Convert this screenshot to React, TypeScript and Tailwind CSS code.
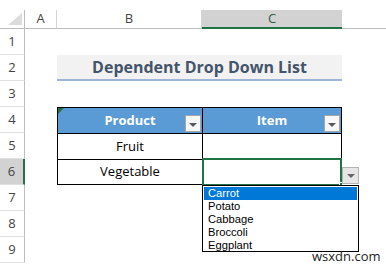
import React from 'react';

const items = ['Carrot', 'Potato', 'Cabbage', 'Broccoli', 'Eggplant'];

function cn(...c: (string | false | undefined)[]) {
  return c.filter(Boolean).join(' ');
}

function FilterButton({ className = '' }: { className?: string }) {
  return (
    <div
      className={`flex items-center justify-center w-[16px] h-[17px] border border-[#a6a6a6] bg-[#f7f7f7] ${className}`}
    >
      <div className="w-0 h-0 border-l-[4px] border-r-[4px] border-t-[4px] border-l-transparent border-r-transparent border-t-[#595959] mt-[2px]" />
    </div>
  );
}

function RowHead({ n, active }: { n: number; active?: boolean }) {
  return (
    <div
      className={cn(
        'w-[25px] shrink-0 flex items-center justify-center border-b border-[#e1e1e1] text-[13px] text-[#444]',
        active ? 'bg-[#d2d2d2] border-r-2 border-r-[#217346]' : 'bg-white border-r border-r-[#bdbdbd]'
      )}
    >
      {n}
    </div>
  );
}

export default function App() {
  return (
    <div
      className="w-[386px] h-[264px] bg-white overflow-hidden relative"
      style={{ fontFamily: '"Open Sans", "Liberation Sans", sans-serif' }}
    >
      <div className="h-[10px]" />

      {/* column headers */}
      <div className="flex h-[19px] text-[13px] text-[#444]">
        <div className="w-[25px] shrink-0 relative border-r border-b border-[#bdbdbd]">
          <svg className="absolute right-[2px] bottom-[3px]" width="14" height="12" viewBox="0 0 14 12">
            <polygon points="14,0 14,12 0,12" fill="#dcdcdc" />
          </svg>
        </div>
        <div className="w-[32px] shrink-0 flex items-center justify-center border-r border-b border-[#d4d4d4] border-b-[#bdbdbd]">A</div>
        <div className="w-[145px] shrink-0 flex items-center justify-center border-r border-b border-[#d4d4d4] border-b-[#bdbdbd]">B</div>
        <div className="w-[140px] shrink-0 flex items-center justify-center bg-[#d2d2d2] border-b-2 border-[#217346] text-[#2f5e45]">C</div>
        <div className="flex-1 border-b border-[#bdbdbd]" />
      </div>

      {/* row 1 */}
      <div className="flex h-[26px]">
        <RowHead n={1} />
      </div>

      {/* row 2 title */}
      <div className="flex h-[26px]">
        <RowHead n={2} />
        <div className="w-[32px] shrink-0" />
        <div className="w-[285px] shrink-0 bg-[#f2f2f2] border-b-2 border-[#9fb4d9] flex items-center justify-center text-[16px] font-bold text-[#44546a]">
          Dependent Drop Down List
        </div>
      </div>

      {/* row 3 */}
      <div className="flex h-[26px]">
        <RowHead n={3} />
      </div>

      {/* row 4 table header */}
      <div className="flex h-[26px]">
        <RowHead n={4} />
        <div className="w-[32px] shrink-0" />
        <div className="w-[145px] shrink-0 relative bg-[#5b9bd5] border-l border-t border-black flex items-center justify-center text-white font-bold text-[13px]">
          <svg className="absolute left-0 top-0" width="6" height="6" viewBox="0 0 6 6">
            <polygon points="0,0 6,0 0,6" fill="#217346" />
          </svg>
          Product
          <FilterButton className="absolute right-[1px] bottom-[1px]" />
        </div>
        <div className="w-[140px] shrink-0 relative bg-[#5b9bd5] border-l border-r border-t border-black flex items-center justify-center text-white font-bold text-[13px]">
          Item
          <FilterButton className="absolute right-[1px] bottom-[1px]" />
        </div>
      </div>

      {/* row 5 */}
      <div className="flex h-[26px]">
        <RowHead n={5} />
        <div className="w-[32px] shrink-0" />
        <div className="w-[145px] shrink-0 border-l border-t border-black flex items-center justify-center text-[13px] text-black">
          Fruit
        </div>
        <div className="w-[140px] shrink-0 border-l border-r border-t border-black" />
      </div>

      {/* row 6 */}
      <div className="flex h-[26px] relative">
        <RowHead n={6} active />
        <div className="w-[32px] shrink-0" />
        <div className="w-[145px] shrink-0 border-l border-t border-b border-black flex items-center justify-center text-[13px] text-black">
          Vegetable
        </div>
        <div className="w-[140px] shrink-0 border-l border-r border-t border-b border-black" />
        {/* active cell */}
        <div className="absolute left-[202px] top-[-1px] w-[140px] h-[28px] border-2 border-[#217346]" />
        <div className="absolute left-[339px] top-[23px] w-[4px] h-[4px] bg-[#217346] border border-white" />
        {/* dropdown button */}
        <div className="absolute left-[342px] top-[8px] w-[17px] h-[17px] bg-[#e6e6e6] border border-[#b4b4b4] flex items-center justify-center">
          <div className="w-0 h-0 border-l-[4px] border-r-[4px] border-t-[4px] border-l-transparent border-r-transparent border-t-[#666] mt-[1px]" />
        </div>
      </div>

      {/* rows 7-9 */}
      <div className="flex h-[26px]">
        <RowHead n={7} />
      </div>
      <div className="flex h-[26px]">
        <RowHead n={8} />
      </div>
      <div className="flex h-[26px]">
        <RowHead n={9} />
      </div>

      {/* dropdown list */}
      <div
        className="absolute left-[202px] top-[185px] w-[157px] h-[67px] bg-white border border-black pt-[1px] px-[1px] text-[11.2px] leading-[13px] text-black"
        style={{ fontFamily: '"Liberation Sans", Arial, sans-serif' }}
      >
        {items.map((it, i) => (
          <div
            key={it}
            className={cn('h-[13px] pl-[4px]', i === 0 && 'bg-[#0078d7] text-white')}
          >
            {it}
          </div>
        ))}
      </div>

      {/* watermark */}
      <div className="absolute left-[312px] top-[249px] text-[13px] leading-[14px] text-[#222]">
        wsxdn.com
      </div>
    </div>
  );
}
